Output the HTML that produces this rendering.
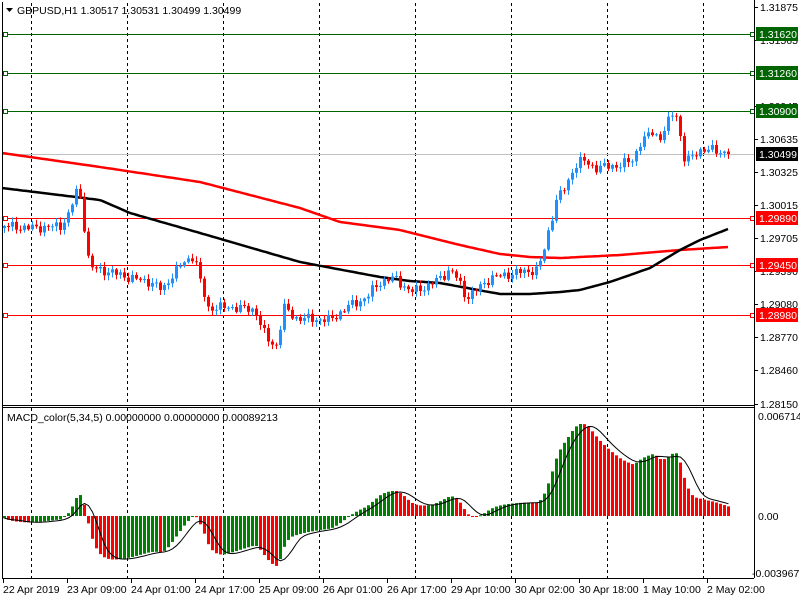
<!DOCTYPE html>
<html><head><meta charset="utf-8"><style>
html,body{margin:0;padding:0;background:#fff;width:800px;height:600px;overflow:hidden}
svg{display:block;font-family:"Liberation Sans","DejaVu Sans",sans-serif;font-size:10.5px}
</style></head><body>
<svg id="s" width="800" height="600" xmlns="http://www.w3.org/2000/svg">
<rect x="0" y="0" width="800" height="600" fill="#fff"/>
<g id="grid" stroke="#000" stroke-dasharray="3,3" stroke-width="1"></g>
<line x1="2" y1="34.5" x2="754" y2="34.5" stroke="#006400"/>
<line x1="2" y1="73.5" x2="754" y2="73.5" stroke="#006400"/>
<line x1="2" y1="111.5" x2="754" y2="111.5" stroke="#006400"/>
<line x1="2" y1="154.5" x2="754" y2="154.5" stroke="#c0c0c0"/>
<line x1="2" y1="218.5" x2="754" y2="218.5" stroke="#f00"/>
<line x1="2" y1="265.5" x2="754" y2="265.5" stroke="#f00"/>
<line x1="2" y1="315.5" x2="754" y2="315.5" stroke="#f00"/>
<g fill="#fff" stroke-width="1">
<rect x="3.5" y="32.5" width="4" height="4" stroke="#006400"/>
<rect x="3.5" y="71.5" width="4" height="4" stroke="#006400"/>
<rect x="3.5" y="109.5" width="4" height="4" stroke="#006400"/>
<rect x="3.5" y="216.5" width="4" height="4" stroke="#f00"/>
<rect x="3.5" y="263.5" width="4" height="4" stroke="#f00"/>
<rect x="3.5" y="313.5" width="4" height="4" stroke="#f00"/>
<rect x="750.5" y="32.5" width="4" height="4" stroke="#006400"/>
<rect x="750.5" y="71.5" width="4" height="4" stroke="#006400"/>
<rect x="750.5" y="109.5" width="4" height="4" stroke="#006400"/>
<rect x="750.5" y="216.5" width="4" height="4" stroke="#f00"/>
<rect x="750.5" y="263.5" width="4" height="4" stroke="#f00"/>
<rect x="750.5" y="313.5" width="4" height="4" stroke="#f00"/>
</g>
<g id="ma"></g>
<g id="candles"></g>
<g id="macd"></g>
<g stroke="#000" fill="none" stroke-width="1">
<line x1="2.5" y1="2" x2="2.5" y2="578"/>
<line x1="754.5" y1="0" x2="754.5" y2="578"/>
<line x1="2" y1="405.5" x2="754" y2="405.5"/>
<line x1="2" y1="407.5" x2="754" y2="407.5"/>
<line x1="2" y1="578.5" x2="754" y2="578.5"/>
</g>
<g fill="#000" id="ax"></g>
<g font-size="10.5">
<rect x="756" y="27" width="42" height="14" fill="#006400"/><text x="759" y="38" fill="#fff">1.31620</text>
<rect x="756" y="66" width="42" height="14" fill="#006400"/><text x="759" y="77" fill="#fff">1.31260</text>
<rect x="756" y="104" width="42" height="14" fill="#006400"/><text x="759" y="115" fill="#fff">1.30900</text>
<rect x="756" y="147" width="42" height="14" fill="#000"/><text x="759" y="158" fill="#fff">1.30499</text>
<rect x="756" y="211" width="42" height="14" fill="#f00"/><text x="759" y="222" fill="#fff">1.29890</text>
<rect x="756" y="258" width="42" height="14" fill="#f00"/><text x="759" y="269" fill="#fff">1.29450</text>
<rect x="756" y="308" width="42" height="14" fill="#f00"/><text x="759" y="319" fill="#fff">1.28980</text>
</g>
<text x="758" y="420">0.0067146</text>
<text x="758" y="520">0.00</text>
<text x="752" y="577">-0.003967</text>
<polygon points="6,8 13,8 9.5,12" fill="#000"/>
<text x="17" y="14">GBPUSD,H1  1.30517 1.30531 1.30499 1.30499</text>
<text x="7" y="421">MACD_color(5,34,5) 0.00000000 0.00000000 0.00089213</text>
<g id="time"></g>
</svg>
<script>
(function(){
var NS="http://www.w3.org/2000/svg";
function el(p,t,a,txt){var e=document.createElementNS(NS,t);for(var k in a)e.setAttribute(k,a[k]);if(txt!=null)e.textContent=txt;document.getElementById(p).appendChild(e);return e;}
[31,127,223,319,415,511,607,703].forEach(function(x){
 el("grid","line",{x1:x+.5,y1:3,x2:x+.5,y2:405});
 el("grid","line",{x1:x+.5,y1:408,x2:x+.5,y2:578});
});
var labs=[["1.31875",7],["1.31565",40],["1.30945",106],["1.30635",139],["1.30325",172],["1.30015",205],["1.29705",238],["1.29390",271],["1.29080",304],["1.28770",337],["1.28460",370],["1.28150",404]];
labs.forEach(function(l){el("ax","text",{x:760,y:l[1]+4},l[0]);el("ax","line",{x1:754,y1:l[1]+.5,x2:758,y2:l[1]+.5,stroke:"#000"});});
var tl=["22 Apr 2019","23 Apr 09:00","24 Apr 01:00","24 Apr 17:00","25 Apr 09:00","26 Apr 01:00","26 Apr 17:00","29 Apr 10:00","30 Apr 02:00","30 Apr 18:00","1 May 10:00","2 May 02:00"];
tl.forEach(function(t,i){var x=3+64*i;el("time","line",{x1:x+.5,y1:578,x2:x+.5,y2:583,stroke:"#000"});el("time","text",{x:x,y:593},t);});
var kp=[[4,226],[30,228],[60,226],[68,215],[76,192],[82,200],[86,253],[92,268],[110,272],[130,278],[150,282],[162,290],[172,275],[184,262],[194,255],[200,282],[208,308],[230,307],[255,310],[262,330],[270,343],[276,345],[284,308],[295,318],[330,320],[350,305],[366,298],[372,290],[380,282],[395,278],[410,292],[430,285],[450,270],[458,280],[466,298],[476,290],[490,278],[520,272],[536,270],[542,258],[546,240],[551,220],[556,200],[566,186],[574,166],[582,160],[595,168],[620,165],[632,160],[640,143],[652,132],[660,138],[672,114],[678,115],[682,158],[690,160],[698,150],[712,150],[728,153]];
function interp(pts,x){if(x<=pts[0][0])return pts[0][1];for(var i=1;i<pts.length;i++){if(x<=pts[i][0]){var a=pts[i-1],b=pts[i];return a[1]+(b[1]-a[1])*(x-a[0])/(b[0]-a[0]);}}return pts[pts.length-1][1];}
var N=182,cl=[],xs=[];
for(var i=0;i<N;i++){var x=4+4*i;xs.push(x);var n=Math.sin(i*2.3)*3.2+Math.sin(i*5.1)*2.2;cl.push(interp(kp,x)+n);}
cl[N-1]=154;
var prev=cl[0]+2;
for(var i=0;i<N;i++){
 var o=prev,c=cl[i],x=xs[i];
 var tp=Math.min(o,c),bt=Math.max(o,c);
 var hw=1+Math.abs(Math.sin(i*3.7))*4,lw=1+Math.abs(Math.cos(i*2.9))*4;
 var up=c<o,col=up?"#1E90FF":"#FF0000";
 el("candles","line",{x1:x+.5,y1:tp-hw,x2:x+.5,y2:bt+lw,stroke:col});
 el("candles","rect",{x:x-1,y:tp,width:3,height:Math.max(1,bt-tp),fill:col});
 prev=c;
}
var sma=[[2,188],[100,200],[130,213],[200,233],[300,262],[380,277],[410,281],[440,283],[500,294],[530,294],[560,292],[580,290],[610,282],[650,268],[680,250],[700,240],[728,229]];
var rma=[[2,153],[100,167],[200,182],[300,208],[340,222],[400,230],[460,245],[500,254],[530,257],[560,258],[620,255],[680,250],[728,247]];
function path(pts){var d="";for(var x=2;x<=728;x+=3){d+=(x==2?"M":"L")+x+","+interp(pts,x).toFixed(1);}return d;}
el("ma","path",{d:path(rma),stroke:"#f00","stroke-width":2.5,fill:"none"});
el("ma","path",{d:path(sma),stroke:"#000","stroke-width":2.5,fill:"none"});
function py(y){return 1.31875-(y-7)/10658;}
var pr=[];for(var i=0;i<40;i++)pr.push(py(220));for(var i=0;i<N;i++)pr.push(py(interp(kp,xs[i])));
var e5=pr[0],e34=pr[0],k5=2/6,k34=2/35,m=[];
for(var i=0;i<pr.length;i++){e5=e5+k5*(pr[i]-e5);e34=e34+k34*(pr[i]-e34);m.push(e5-e34);}
m=m.slice(40);
var Z=516,S=100/0.0067146,sig=[],d="";
for(var i=0;i<N;i++){var a=0,cc=0;for(var j=Math.max(0,i-4);j<=i;j++){a+=m[j];cc++;}sig.push(a/cc);}
for(var i=0;i<N;i++){
 var v=m[i]*S,col=(i>0&&m[i]<m[i-1])?"#FF0000":"#008000";
 var y=v>0?Z-v:Z;
 el("macd","rect",{x:xs[i]-1,y:y,width:3,height:Math.max(1,Math.abs(v)),fill:col});
 d+=(i?"L":"M")+(xs[i]+.5)+","+(Z-sig[i]*S).toFixed(1);
}
el("macd","path",{d:d,stroke:"#000","stroke-width":1,fill:"none"});
})();
</script>
</body></html>
